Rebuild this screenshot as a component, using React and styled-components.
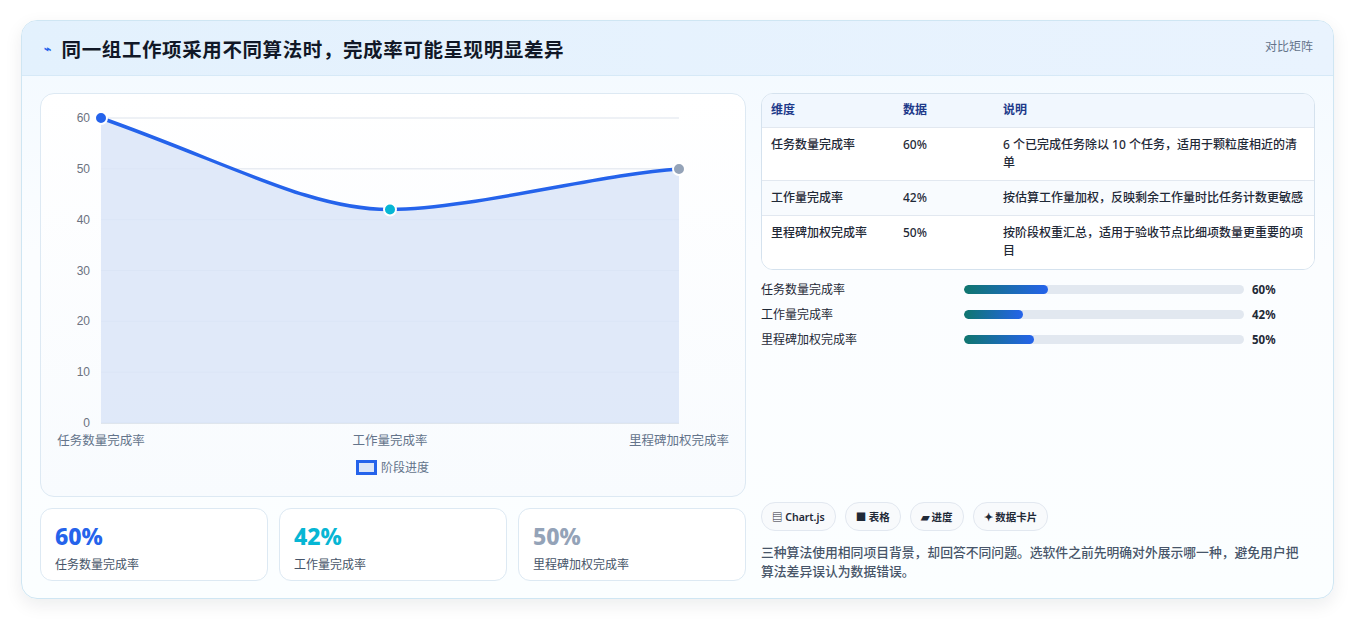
import React from "react";
import styled, { createGlobalStyle } from "styled-components";

const G = createGlobalStyle`
  body{margin:0;background:#f3f4f6;font-family:"Noto Sans","Noto Sans CJK SC",sans-serif;}
`;
const Page = styled.div`padding:20px 20px 22px 21px;background:#fff;height:621px;box-sizing:border-box;`;
const Card = styled.div`
  border:1px solid #cfe6f3;border-radius:16px;overflow:hidden;
  background:linear-gradient(180deg,#f2f9ff 0%,#fbfdff 40%,#fbfeff 100%);
  box-shadow:0 6px 18px rgba(15,23,42,.08);height:579px;box-sizing:border-box;
`;
const Header = styled.div`
  height:55px;display:flex;align-items:center;justify-content:space-between;
  padding:0 20px 0 22px;background:linear-gradient(90deg,#e3f1fd,#e9f3fe);
  border-bottom:1px solid #d6e9f7;box-sizing:border-box;
`;
const Title = styled.h1`margin:0;font-size:19.5px;font-weight:700;color:#111827;display:flex;align-items:center;gap:10px;letter-spacing:.6px;`;
const Tag = styled.span`font-size:12px;color:#64748b;align-self:flex-start;margin-top:16px;`;
const Body = styled.div`display:grid;grid-template-columns:706px 554px;gap:15px;padding:17px 19px 0 18px;`;
const Col = styled.div`display:flex;flex-direction:column;`;
const Panel = styled.div`height:402px;border:1px solid #dde9f3;border-radius:14px;background:linear-gradient(180deg,#fff,#f8fbfe);`;
const Stats = styled.div`display:grid;grid-template-columns:repeat(3,1fr);gap:11px;margin-top:11px;`;
const Stat = styled.div`height:73px;border:1px solid #dde9f3;border-radius:12px;background:#fff;padding:13px 14px;box-sizing:border-box;`;
const Big = styled.div`font-size:23px;font-weight:800;color:${p=>p.c};line-height:28px;`;
const Small = styled.div`font-size:12px;color:#475569;margin-top:5px;`;
const Table = styled.div`border:1px solid #d5e2ee;border-radius:12px;overflow:hidden;background:#fff;`;
const Row = styled.div`display:grid;grid-template-columns:132px 100px 300px;padding:${p=>p.h?"7px":"8px"} 9px;min-height:${p=>p.mh}px;box-sizing:border-box;
  font-size:12px;line-height:18px;color:${p=>p.h?"#1e3a8a":"#1f2937"};font-weight:${p=>p.h?600:500};
  background:${p=>p.h?"#f1f7fe":p.alt?"#f8fbfe":"#fff"};border-top:${p=>p.first?"none":"1px solid #e2e8f0"};`;
const Bars = styled.div`display:flex;flex-direction:column;gap:7px;margin-top:10px;`;
const BarRow = styled.div`display:grid;grid-template-columns:203px 280px 1fr;align-items:center;gap:0;font-size:12px;color:#1f2937;height:18px;`;
const Track = styled.div`height:9px;border-radius:5px;background:#e2e8f0;overflow:hidden;`;
const Fill = styled.div`height:100%;border-radius:5px;background:linear-gradient(90deg,#0f766e,#2563eb);`;
const Val = styled.span`font-weight:700;font-size:11.5px;padding-left:8px;`;
const Chips = styled.div`display:flex;gap:9px;margin-top:auto;`;
const Chip = styled.span`height:27px;padding:0 10px;border:1px solid #e2e8f0;border-radius:14px;background:#f8fafc;display:inline-flex;align-items:center;gap:4px;font-size:10.5px;font-weight:600;color:#1f2937;`;
const Para = styled.p`margin:12px 0 0;font-size:12.8px;line-height:19px;color:#475569;font-weight:500;padding-right:6px;`;

const ys=[0,10,20,30,40,50,60];
const Y=v=>329-v*(305/60);
function Chart(){
  return (
    <svg width="706" height="402" style={{display:"block"}}>
      {ys.map(v=>(
        <g key={v}>
          <line x1="60" x2="638" y1={Y(v)} y2={Y(v)} stroke={v===0?"#c6d0dc":"#dde3ec"} />
          <text x="49" y={Y(v)+4} fontSize="12" fill="#6b7280" textAnchor="end" fontFamily="Liberation Sans,sans-serif">{v}</text>
        </g>
      ))}
      <path d="M60,24 C190,70 270,116 349,115.5 C430,115 560,80 638,75 L638,329 L60,329 Z" fill="#dbe5f8" opacity=".85"/>
      <path d="M60,24 C190,70 270,116 349,115.5 C430,115 560,80 638,75" fill="none" stroke="#2563eb" strokeWidth="3.5"/>
      <circle cx="60" cy="24" r="6" fill="#2563eb" stroke="#fff" strokeWidth="2"/>
      <circle cx="349" cy="115.5" r="6" fill="#06b6d4" stroke="#fff" strokeWidth="2"/>
      <circle cx="638" cy="75" r="6" fill="#94a3b8" stroke="#fff" strokeWidth="2"/>
      {[["任务数量完成率",60],["工作量完成率",349],["里程碑加权完成率",638]].map(([t,x])=>(
        <text key={t} x={x} y="351" fontSize="12.5" fill="#64748b" textAnchor="middle">{t}</text>
      ))}
      <rect x="316.5" y="367.5" width="18" height="12" fill="#dbe5f8" stroke="#2563eb" strokeWidth="3"/>
      <text x="340" y="378" fontSize="12" fill="#64748b">阶段进度</text>
    </svg>
  );
}

const rows=[["任务数量完成率","60%","6 个已完成任务除以 10 个任务，适用于颗粒度相近的清单",53],["工作量完成率","42%","按估算工作量加权，反映剩余工作量时比任务计数更敏感",35],["里程碑加权完成率","50%","按阶段权重汇总，适用于验收节点比细项数量更重要的项目",54]];

export default function App(){
  return (
    <Page>
      <G/>
      <Card>
        <Header>
          <Title><span style={{color:"#2563eb",fontSize:12}}>⌁</span>同一组工作项采用不同算法时，完成率可能呈现明显差异</Title>
          <Tag>对比矩阵</Tag>
        </Header>
        <Body>
          <Col>
            <Panel><Chart/></Panel>
            <Stats>
              <Stat><Big c="#2563eb">60%</Big><Small>任务数量完成率</Small></Stat>
              <Stat><Big c="#06b6d4">42%</Big><Small>工作量完成率</Small></Stat>
              <Stat><Big c="#94a3b8">50%</Big><Small>里程碑加权完成率</Small></Stat>
            </Stats>
          </Col>
          <Col style={{height:488}}>
            <Table>
              <Row h first mh={33}><span>维度</span><span>数据</span><span>说明</span></Row>
              {rows.map((r,i)=>(
                <Row key={i} alt={i===1} mh={r[3]}><span>{r[0]}</span><span>{r[1]}</span><span>{r[2]}</span></Row>
              ))}
            </Table>
            <Bars>
              {[["任务数量完成率",60],["工作量完成率",42],["里程碑加权完成率",50]].map(([t,v])=>(
                <BarRow key={t}><span>{t}</span><Track><Fill style={{width:`${v/2}%`}}/></Track><Val>{v}%</Val></BarRow>
              ))}
            </Bars>
            <Chips>
              <Chip>▤ Chart.js</Chip><Chip>■ 表格</Chip><Chip>▰ 进度</Chip><Chip>✦ 数据卡片</Chip>
            </Chips>
            <Para>三种算法使用相同项目背景，却回答不同问题。选软件之前先明确对外展示哪一种，避免用户把算法差异误认为数据错误。</Para>
          </Col>
        </Body>
      </Card>
    </Page>
  );
}
